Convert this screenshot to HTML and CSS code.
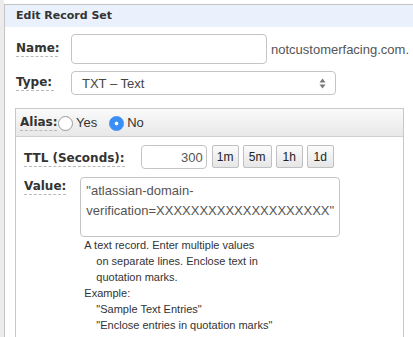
FILE: index.html
```html
<!DOCTYPE html>
<html lang="en">
<head>
    <meta charset="UTF-8">
    <title>Edit Record Set</title>
    <link rel="stylesheet" href="styles.css">
</head>
<body>
<div class="page">
    <div class="side"></div>
    <div class="main">
        <div class="panel">
            <div class="panel-head">Edit Record Set</div>
            <div class="row row-name">
                <span class="label">Name:</span>
                <input class="text-input name-input" type="text">
                <span class="suffix">notcustomerfacing.com.</span>
            </div>
            <div class="row row-type">
                <span class="label">Type:</span>
                <div class="select">
                    <span>TXT – Text</span>
                    <svg width="7" height="11" viewBox="0 0 7 11"><path d="M3.5 0.5 L6.5 4.5 L0.5 4.5 Z" fill="#777"/><path d="M3.5 10.5 L6.5 6.5 L0.5 6.5 Z" fill="#777"/></svg>
                </div>
            </div>
            <div class="box">
                <div class="box-head">
                    <span class="label">Alias:</span>
                    <label class="radio"><input type="radio" name="alias"> Yes</label>
                    <label class="radio radio-no"><input type="radio" name="alias" checked> No</label>
                </div>
                <div class="box-body">
                    <div class="ttl-row">
                        <span class="label lbl-ttl">TTL (Seconds):</span>
                        <input class="text-input ttl-input" type="text" value="300">
                        <button class="btn">1m</button>
                        <button class="btn btn-wide">5m</button>
                        <button class="btn">1h</button>
                        <button class="btn">1d</button>
                    </div>
                    <div class="value-row">
                        <span class="label lbl-value">Value:</span>
                        <div class="value-col">
                            <textarea class="value-input">"atlassian-domain-verification=XXXXXXXXXXXXXXXXXXXX"</textarea>
                            <div class="help">
                                <div>A text record. Enter multiple values</div>
                                <div class="indent">on separate lines. Enclose text in</div>
                                <div class="indent">quotation marks.</div>
                                <div>Example:</div>
                                <div class="indent">"Sample Text Entries"</div>
                                <div class="indent">"Enclose entries in quotation marks"</div>
                            </div>
                        </div>
                    </div>
                </div>
            </div>
        </div>
    </div>
</div>
</body>
</html>
```

FILE: styles.css
```css
body {
    margin: 0;
    background: #fff;
    font-family: "Liberation Sans", Arial, sans-serif;
    color: #333;
    overflow: hidden;
}

.page {
    display: flex;
    height: 337px;
}

.side {
    width: 4px;
    background: #ececec;
}

.main {
    flex: 1;
    padding-top: 4px;
}

.panel {
    height: 100%;
    border-top: 1px solid #c4c4c4;
    border-left: 1px solid #c4c4c4;
}

.panel-head {
    height: 22px;
    line-height: 22px;
    padding-left: 11px;
    background: #eaf1fc;
    font-family: "DejaVu Sans", Verdana, sans-serif;
    font-weight: bold;
    font-size: 11px;
    color: #333;
}

.label {
    font-family: "DejaVu Sans", Verdana, sans-serif;
    font-weight: bold;
    font-size: 12px;
    color: #333;
    border-bottom: 1px dashed #b8b8b8;
    line-height: 15px;
}

.row {
    display: flex;
    align-items: center;
    padding-left: 11px;
}

.row .label {
    width: 42px;
    margin-right: 13px;
}

.row-name {
    margin-top: 7px;
    height: 30px;
}

.text-input {
    box-sizing: border-box;
    border: 1px solid #c4c4c4;
    border-radius: 4px;
    background: #fff;
    outline: none;
    font-family: "Liberation Sans", Arial, sans-serif;
    color: #555;
}

.name-input {
    width: 196px;
    height: 30px;
    margin-right: 4px;
}

.suffix {
    font-size: 13px;
    color: #555;
}

.row-type {
    margin-top: 7px;
    height: 24px;
}

.row-type .label {
    width: 38px;
    margin-right: 17px;
}

.select {
    box-sizing: border-box;
    width: 265px;
    height: 24px;
    border: 1px solid #c4c4c4;
    border-radius: 4px;
    display: flex;
    align-items: center;
    justify-content: space-between;
    padding: 0 9px 0 10px;
    font-size: 13px;
    color: #444;
}

.box {
    margin: 13px 9px 0 10px;
    border: 1px solid #c8c8c8;
    border-bottom: none;
    height: 240px;
}

.box-head {
    box-sizing: border-box;
    height: 28px;
    border-bottom: 1px solid #d0d0d0;
    background: linear-gradient(#fafafa, #e8e8e8);
    display: flex;
    align-items: center;
    padding-left: 4px;
}

.box-head .label {
    width: 37px;
}

.radio {
    display: flex;
    align-items: center;
    font-size: 13px;
    color: #333;
    margin-right: 11px;
}

.radio input {
    appearance: none;
    -webkit-appearance: none;
    width: 15px;
    height: 15px;
    margin: 2px 3px 0 1px;
    border: 1px solid #999;
    border-radius: 50%;
    background: #fff;
    box-sizing: border-box;
}

.radio input:checked {
    border: 1px solid #3a8cf5;
    background: radial-gradient(circle, #fff 0 1.6px, #3b8ef6 2.2px);
}

.box-body {
    padding: 8px 0 0 8px;
}

.ttl-row {
    display: flex;
    align-items: center;
    height: 24px;
}

.lbl-ttl {
    margin-top: 3px;
    margin-right: 16px;
}

.ttl-input {
    width: 66px;
    height: 24px;
    text-align: right;
    font-size: 13px;
    padding-right: 3px;
    margin-right: 5px;
}

.btn {
    width: 27px;
    height: 23px;
    padding: 0;
    margin: 0 4px 1px 0;
    border: 1px solid #c0c0c0;
    border-radius: 2px;
    background: linear-gradient(#fbfbfb, #e6e6e6);
    font-family: "Liberation Sans", Arial, sans-serif;
    font-size: 12px;
    color: #222;
}

.btn-wide {
    width: 29px;
}

.value-row {
    display: flex;
    margin-top: 8px;
}

.lbl-value {
    align-self: flex-start;
    margin-top: 2px;
    margin-right: 14px;
}

.value-input {
    display: block;
    box-sizing: border-box;
    width: 260px;
    height: 60px;
    resize: none;
    border: 1px solid #c4c4c4;
    border-radius: 4px;
    padding: 3px 2px 3px 5px;
    font-family: "Liberation Sans", Arial, sans-serif;
    font-size: 13px;
    line-height: 20px;
    color: #555;
    outline: none;
    overflow: hidden;
}

.help {
    padding-left: 4px;
    font-size: 11px;
    line-height: 16px;
    color: #333;
}

.help .indent {
    padding-left: 12px;
}
```
